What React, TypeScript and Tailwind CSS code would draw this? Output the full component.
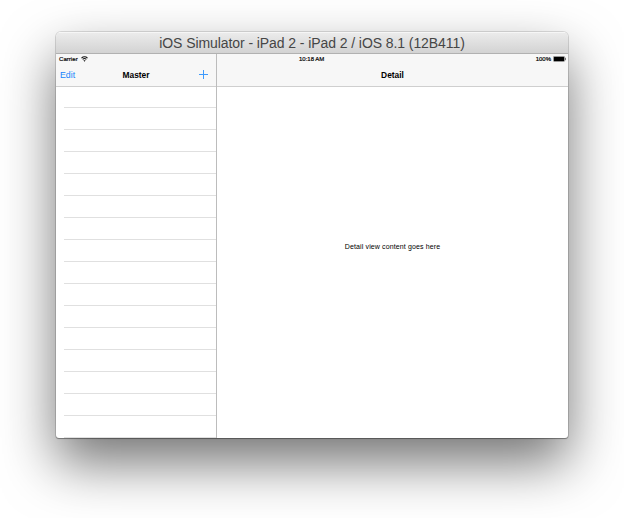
function WifiIcon() {
  return (
    <svg className="h-[6px] w-[7px]" viewBox="0 0 14 12" fill="none" stroke="#111" strokeWidth="2.1">
      <path d="M1 4.3C4.4 0.9 9.6 0.9 13 4.3" />
      <path d="M3.3 6.9C5.4 4.8 8.6 4.8 10.7 6.9" />
      <path d="M7 11.5L4.9 9.1C6 8.1 8 8.1 9.1 9.1Z" fill="#111" stroke="none" />
    </svg>
  );
}

function BatteryIcon() {
  return (
    <svg className="h-[6px] w-[13px]" viewBox="0 0 13 6">
      <rect x="0" y="0" width="12" height="6" rx="1.4" fill="#999" />
      <rect x="1" y="1" width="10" height="4" rx="0.3" fill="#000" />
      <path d="M12 1.6V4.4C13.2 4.1 13.2 1.9 12 1.6Z" fill="#555" />
    </svg>
  );
}

function PlusIcon() {
  return (
    <svg className="h-[9px] w-[9px]" viewBox="0 0 9 9">
      <path d="M4 0H5V4H9V5H5V9H4V5H0V4H4Z" fill="#3d9afc" />
    </svg>
  );
}

const rows = Array.from({ length: 16 }, (_, i) => i);

export default function App() {
  return (
    <div className="h-[518px] w-[624px] overflow-hidden bg-white px-[56px] pt-[32px] font-['Liberation_Sans',Arial,sans-serif] text-black">
      <div className="flex h-[406px] w-[512px] flex-col overflow-hidden rounded-t-[5px] rounded-b-[3px] bg-white shadow-[0_0_0_1px_rgba(0,0,0,0.12),0_1px_1px_rgba(0,0,0,0.3),0_25px_54px_rgba(0,0,0,0.55)]">
        <header className="flex h-[22px] shrink-0 items-center justify-center border-t border-b border-t-[#f6f6f6] border-b-[#b1b1b1] bg-linear-to-b from-[#ebebeb] to-[#d3d3d3]">
          <h1 className="text-[14px] leading-none tracking-[-0.08px] whitespace-nowrap text-[#464646]">
            iOS Simulator - iPad 2 - iPad 2 / iOS 8.1 (12B411)
          </h1>
        </header>
        <div className="flex min-h-0 flex-1">
          <aside className="flex w-[161px] shrink-0 flex-col border-r border-[#bcbcbc]">
            <div className="flex h-[33px] shrink-0 flex-col border-b border-[#cfcfcf] bg-[#f7f7f7]">
              <div className="flex h-[10px] items-center gap-[3px] pl-[3px] text-[6px] leading-none tracking-[0.05px] [-webkit-text-stroke:0.2px_#000]">
                <span>Carrier</span>
                <WifiIcon />
              </div>
              <div className="flex h-[22px] items-center justify-between pr-[8px] pl-[4px] text-[8.4px] leading-none">
                <span className="w-[39px] text-[8.8px] text-[#1683fb]">Edit</span>
                <span className="font-bold">Master</span>
                <span className="flex w-[35px] justify-end pb-px">
                  <PlusIcon />
                </span>
              </div>
            </div>
            <ul className="flex flex-1 flex-col pl-[8px]">
              {rows.map((row) => (
                <li key={row} className="h-[22px] shrink-0 border-b border-[#e0e0e0] first:h-[21px]" />
              ))}
            </ul>
          </aside>
          <main className="flex flex-1 flex-col">
            <div className="flex h-[33px] shrink-0 flex-col border-b border-[#cfcfcf] bg-[#f7f7f7]">
              <div className="flex h-[10px] items-center justify-between pr-[2px] pl-[82px] text-[6px] leading-none [-webkit-text-stroke:0.2px_#000]">
                <span>10:18 AM</span>
                <span className="flex items-center gap-[2px]">
                  <span>100%</span>
                  <BatteryIcon />
                </span>
              </div>
              <div className="flex h-[22px] items-center justify-center text-[8.4px] leading-none font-bold">Detail</div>
            </div>
            <div className="flex flex-1 items-center justify-center pb-[32px] text-[7px] leading-none tracking-[0.12px]">
              Detail view content goes here
            </div>
          </main>
        </div>
      </div>
    </div>
  );
}
